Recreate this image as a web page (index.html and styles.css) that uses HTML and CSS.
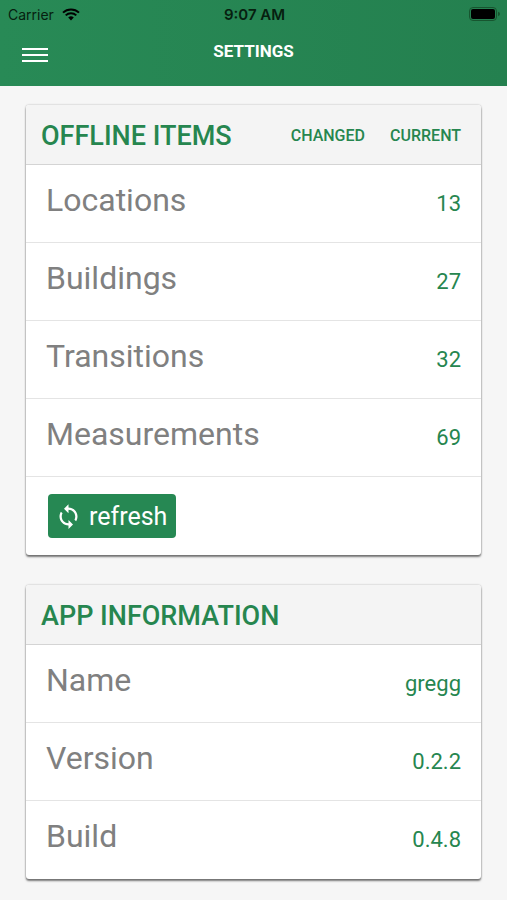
FILE: index.html
```html
<!DOCTYPE html>
<html lang="en">

<head>
  <meta charset="UTF-8" />
  <meta name="viewport" content="width=device-width, initial-scale=1.0" />
  <title>Settings</title>
  <link rel="stylesheet" href="styles.css">
</head>

<body>
  <header class="header">
    <div class="status-bar">
      <div class="carrier">
        <span>Carrier</span>
        <svg class="wifi" viewBox="0 0 18 13" aria-hidden="true">
          <path d="M1 4.6a11.6 11.6 0 0 1 16 0" />
          <path d="M3.7 7.4a7.6 7.6 0 0 1 10.6 0" />
          <path class="dot" d="M9 12.4 6.2 9.6a4 4 0 0 1 5.6 0z" />
        </svg>
      </div>
      <time class="time">9:07 AM</time>
      <svg class="battery" viewBox="0 0 32 14" aria-hidden="true">
        <rect class="shell" x="0.5" y="0.5" width="27" height="13" rx="3.5" />
        <rect x="2" y="2" width="24" height="10" rx="2" />
        <path class="tip" d="M29 4.8q2 .6 2 2.2t-2 2.2z" />
      </svg>
    </div>
    <nav class="nav-bar">
      <button class="menu" type="button" aria-label="Menu">
        <span></span>
        <span></span>
        <span></span>
      </button>
      <h1>SETTINGS</h1>
    </nav>
  </header>

  <main class="content">
    <section class="card">
      <table>
        <thead>
          <tr>
            <th class="title" scope="col">OFFLINE ITEMS</th>
            <th class="col" scope="col">CHANGED</th>
            <th class="col" scope="col">CURRENT</th>
          </tr>
        </thead>
        <tbody>
          <tr>
            <th scope="row">Locations</th>
            <td></td>
            <td>13</td>
          </tr>
          <tr>
            <th scope="row">Buildings</th>
            <td></td>
            <td>27</td>
          </tr>
          <tr>
            <th scope="row">Transitions</th>
            <td></td>
            <td>32</td>
          </tr>
          <tr>
            <th scope="row">Measurements</th>
            <td></td>
            <td>69</td>
          </tr>
        </tbody>
      </table>
      <div class="card-footer">
        <button class="refresh" type="button">
          <svg viewBox="0 0 24 24" aria-hidden="true">
            <path d="M12 4V1L8 5l4 4V6c3.31 0 6 2.69 6 6 0 1.01-.25 1.97-.7 2.8l1.46 1.46C19.54 15.03 20 13.57 20 12c0-4.42-3.58-8-8-8zm0 14c-3.31 0-6-2.69-6-6 0-1.01.25-1.97.7-2.8L5.24 7.74C4.46 8.97 4 10.43 4 12c0 4.42 3.58 8 8 8v3l4-4-4-4v3z" />
          </svg>
          refresh
        </button>
      </div>
    </section>

    <section class="card">
      <table>
        <thead>
          <tr>
            <th class="title" scope="colgroup" colspan="2">APP INFORMATION</th>
          </tr>
        </thead>
        <tbody>
          <tr>
            <th scope="row">Name</th>
            <td>gregg</td>
          </tr>
          <tr>
            <th scope="row">Version</th>
            <td>0.2.2</td>
          </tr>
          <tr>
            <th scope="row">Build</th>
            <td>0.4.8</td>
          </tr>
        </tbody>
      </table>
    </section>
  </main>
</body>

</html>
```
FILE: styles.css
```css
* {
  box-sizing: border-box;
}

body {
  margin: 0;
  background: #f6f6f6;
  font-family: Roboto, sans-serif;
  color: #808080;
}

/* header */
.header {
  background: linear-gradient(to right, #288a56, #24804f);
}

.status-bar {
  display: grid;
  grid-template-columns: 1fr auto 1fr;
  align-items: center;
  height: 28px;
  padding: 0 6px 0 8px;
  font-family: Inter, sans-serif;
  font-size: 14px;
  color: #06200f;
}

.carrier {
  display: flex;
  align-items: center;
  gap: 8px;
}

.wifi {
  width: 18px;
  height: 13px;
  fill: none;
  stroke: #000;
  stroke-width: 2;
}

.wifi .dot {
  fill: #000;
  stroke: none;
}

.time {
  font-size: 15px;
  font-weight: 600;
}

.battery {
  justify-self: end;
  width: 32px;
  height: 14px;
}

.battery .shell {
  fill: none;
  stroke: #17552f;
}

.battery .tip {
  fill: #17552f;
}

.nav-bar {
  display: grid;
  grid-template-columns: 1fr auto 1fr;
  align-items: start;
  height: 58px;
  padding: 12px 22px 0;
}

.menu {
  display: flex;
  flex-direction: column;
  gap: 4px;
  width: 26px;
  padding: 8px 0;
  border: none;
  background: none;
  cursor: pointer;
}

.menu span {
  height: 2px;
  width: 100%;
  background: #fff;
}

.nav-bar h1 {
  margin: 0;
  font-size: 17px;
  line-height: 22px;
  font-weight: 700;
  color: #fff;
}

/* cards */
.content {
  display: flex;
  flex-direction: column;
  gap: 30px;
  padding: 19px 26px;
}

.card {
  background: #fff;
  border-radius: 3px;
  box-shadow: 0 2px 2px rgba(0, 0, 0, 0.5), 0 0 2px rgba(0, 0, 0, 0.3);
}

.card table {
  width: 100%;
  border-collapse: separate;
  border-spacing: 0;
}

.card th,
.card td {
  padding: 0;
}

.card thead th {
  height: 60px;
  padding-top: 2px;
  background: #f4f4f4;
  border-bottom: 1px solid #d4d4d4;
  color: #26864f;
  font-weight: 500;
}

.card thead th:first-child {
  border-top-left-radius: 3px;
}

.card thead th:last-child {
  border-top-right-radius: 3px;
}

.card .title {
  padding-left: 15px;
  font-size: 27px;
  text-align: left;
}

.card .col {
  width: 96px;
  padding-right: 20px;
  font-size: 16px;
  text-align: right;
}

.card tbody th,
.card tbody td {
  height: 78px;
  padding-top: 16px;
  border-bottom: 1px solid #e4e4e4;
  font-weight: 400;
  vertical-align: baseline;
}

.card tbody th {
  padding-left: 20px;
  font-size: 32px;
  text-align: left;
}

.card tbody td {
  padding-right: 20px;
  font-size: 22px;
  text-align: right;
  color: #26864f;
}

.card table:last-child tr:last-child td,
.card table:last-child tbody tr:last-child th {
  border-bottom: none;
}

.card-footer {
  padding: 17px 22px;
}

.refresh {
  display: flex;
  align-items: center;
  gap: 7px;
  height: 44px;
  padding: 0 9px 0 7px;
  border: none;
  border-radius: 4px;
  background: #268853;
  font: 400 25px Roboto, sans-serif;
  color: #fff;
  cursor: pointer;
}

.refresh svg {
  width: 27px;
  height: 27px;
  fill: #fff;
}
```
